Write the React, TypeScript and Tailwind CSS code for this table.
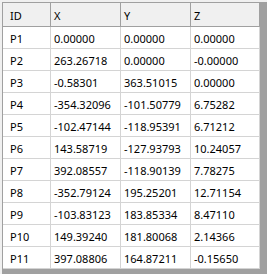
import React from 'react';

type Point = {
  id: string;
  x: string;
  y: string;
  z: string;
};

const points: Point[] = [
  { id: 'P1', x: '0.00000', y: '0.00000', z: '0.00000' },
  { id: 'P2', x: '263.26718', y: '0.00000', z: '-0.00000' },
  { id: 'P3', x: '-0.58301', y: '363.51015', z: '0.00000' },
  { id: 'P4', x: '-354.32096', y: '-101.50779', z: '6.75282' },
  { id: 'P5', x: '-102.47144', y: '-118.95391', z: '6.71212' },
  { id: 'P6', x: '143.58719', y: '-127.93793', z: '10.24057' },
  { id: 'P7', x: '392.08557', y: '-118.90139', z: '7.78275' },
  { id: 'P8', x: '-352.79124', y: '195.25201', z: '12.71154' },
  { id: 'P9', x: '-103.83123', y: '183.85334', z: '8.47110' },
  { id: 'P10', x: '149.39240', y: '181.80068', z: '2.14366' },
  { id: 'P11', x: '397.08806', y: '164.87211', z: '-0.15650' },
];

const cols = 'grid grid-cols-[48px_70px_70px_69px]';

const App = () => {
  return (
    <div
      className="w-[267px] h-[274px] bg-[#f0f0f0] pl-[2px] pt-[2px] overflow-hidden text-[11px] text-black"
      style={{ fontFamily: '"Noto Sans", "Open Sans", sans-serif' }}
    >
      <div className="w-[265px] h-[272px] border-l border-t border-[#a0a0a0] bg-[#a0a0a0]">
        <div className="w-[257px] bg-white">
          <div className={`${cols} h-[24px] bg-[#f0f0f0] border-b border-[#a0a0a0]`}>
            <div className="flex items-center pl-[7px] pt-[4px] border-r border-[#a0a0a0]">ID</div>
            <div className="flex items-center pl-[3px] pt-[4px] border-r border-[#a0a0a0]">X</div>
            <div className="flex items-center pl-[3px] pt-[4px] border-r border-[#a0a0a0]">Y</div>
            <div className="flex items-center pl-[3px] pt-[4px] border-r border-[#a0a0a0]">Z</div>
          </div>
          {points.map((p) => (
            <div key={p.id} className={`${cols} h-[22px] border-b border-[#d4d4d4]`}>
              <div className="flex items-center pl-[7px] pt-[4px] border-r border-[#d4d4d4]">{p.id}</div>
              <div className="flex items-center pl-[3px] pt-[4px] border-r border-[#d4d4d4]">{p.x}</div>
              <div className="flex items-center pl-[3px] pt-[4px] border-r border-[#d4d4d4]">{p.y}</div>
              <div className="flex items-center pl-[3px] pt-[4px] border-r border-[#d4d4d4]">{p.z}</div>
            </div>
          ))}
        </div>
      </div>
    </div>
  );
};

export default App;
